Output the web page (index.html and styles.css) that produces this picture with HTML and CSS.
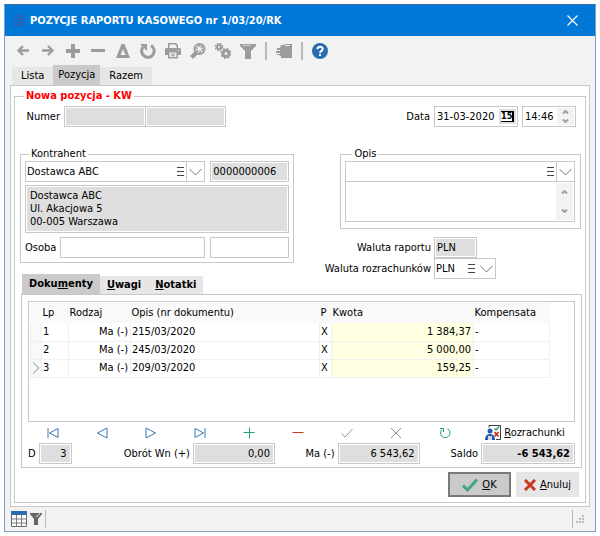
FILE: index.html
```html
<!DOCTYPE html>
<html lang="pl">
<head>
  <meta charset="UTF-8">
  <title>Pozycje raportu kasowego</title>
  <meta name="viewport" content="width=device-width, initial-scale=1">
  <link rel="stylesheet" href="styles.css">
</head>
<body>

<div class="window">
  <!-- TITLE BAR -->
  <header class="titlebar">
    <svg class="title-icon" width="12" height="11" viewBox="0 0 12 11"><path fill="#2a62b8" d="M0 0h2v2H0zM3 0h9v2H3zM0 3h2v2H0zM3 3h9v2H3zM0 6h2v2H0zM3 6h9v2H3zM0 9h2v2H0zM3 9h9v2H3z"/></svg>
    <h1>POZYCJE RAPORTU KASOWEGO nr 1/03/20/RK</h1>
    <button class="close" aria-label="Zamknij">
      <svg width="11" height="11" viewBox="0 0 11 11"><path d="M.5.5l10 10M10.500.5l-10 10" stroke="#fff" stroke-width="1.200"/></svg>
    </button>
  </header>

  <!-- TOOLBAR -->
  <div class="toolbar">
    <button aria-label="Wstecz"><svg viewBox="0 0 16 16"><path d="M14 7.500H4M8 3L3.500 7.500 8 12" fill="none" stroke="#9c9c9c" stroke-width="2.400"/></svg></button>
    <button aria-label="Dalej"><svg viewBox="0 0 16 16"><path d="M2 7.500h10M8 3l4.500 4.500L8 12" fill="none" stroke="#9c9c9c" stroke-width="2.400"/></svg></button>
    <button aria-label="Dodaj"><svg viewBox="0 0 16 16"><path d="M6 1h4v5h5v4h-5v5H6v-5H1V6h5z"/></svg></button>
    <button aria-label="Usuń"><svg viewBox="0 0 16 16"><path d="M1 6h14v3H1z"/></svg></button>
    <button aria-label="Zmień"><svg viewBox="0 0 16 16"><path fill-rule="evenodd" d="M6.500 1h3L15 15H1zM8 6l-2.500 6h5z"/></svg></button>
    <button aria-label="Odśwież"><svg viewBox="0 0 16 16"><path d="M11 2.500A6.300 6.300 0 1 1 3 4" fill="none" stroke="#9c9c9c" stroke-width="3"/><path d="M0 1h7v7L5 6z"/></svg></button>
    <button aria-label="Drukuj"><svg viewBox="0 0 16 16"><path fill-rule="evenodd" d="M3 0h8l2 2v3h2l1 1v6h-3v3.500H3V12H0V6l1-1h2zM4.500 1.500V5h7V3L10 1.500zM4.500 9.500V14h7V9.500zM13 7v1h1V7zM6 10.500h4v1H6zM6 12.300h4v1H6z"/></svg></button>
    <button aria-label="Szukaj"><svg viewBox="0 0 16 16"><circle cx="9.500" cy="6" r="5" fill="none" stroke="#9c9c9c" stroke-width="2"/><circle cx="9.500" cy="6" r="3" fill="none" stroke="#9c9c9c" stroke-width="2" stroke-dasharray="2 1"/><path d="M5 8l3 3-5 5-3-3z"/></svg></button>
    <button aria-label="Ustawienia"><svg viewBox="0 0 16 16"><circle cx="4" cy="4" r="2" fill="none" stroke="#9c9c9c" stroke-width="2"/><circle cx="4" cy="4" r="3.500" fill="none" stroke="#9c9c9c" stroke-width="1.500" stroke-dasharray="1.700 1.100"/><circle cx="11" cy="10.500" r="3" fill="none" stroke="#9c9c9c" stroke-width="3"/><circle cx="11" cy="10.500" r="4.800" fill="none" stroke="#9c9c9c" stroke-width="1.500" stroke-dasharray="2 1.770"/></svg></button>
    <button aria-label="Filtruj"><svg viewBox="0 0 16 16"><path d="M0 1h16v2l-5 5v8H5V8L0 3z"/><path d="M2.500 2.500h8" stroke="#d4d4d4"/></svg></button>
    <i class="sep"></i>
    <button aria-label="Dokument"><svg viewBox="0 0 16 16"><path d="M5 2h3l1-1h7v14H5v-2L3 12H1v-1h3v-1H0V8h4V7H1V5h3z"/><path d="M9 2.500h5" stroke="#f2f2f2"/></svg></button>
    <i class="sep"></i>
    <button aria-label="Pomoc"><svg viewBox="0 0 16 16"><circle cx="8" cy="8" r="8" fill="#2b6cb0"/><path d="M5.500 6.200C5.500 3 10.700 3 10.700 6 10.700 8 8 7.700 8 10" fill="none" stroke="#fff" stroke-width="2"/><path fill="#fff" d="M7 11h2v2H7z"/></svg></button>
  </div>

  <!-- MAIN TABS -->
  <div class="tabs" role="tablist">
    <button role="tab">Lista</button>
    <button role="tab" class="active" aria-selected="true">Pozycja</button>
    <button role="tab">Razem</button>
  </div>

  <main class="pane">
    <fieldset class="form">
      <legend class="form-title">Nowa pozycja - KW</legend>

      <div class="row head-row">
        <label class="num-label" for="numer">Numer</label>
        <div class="split">
          <input id="numer" class="ro" type="text" readonly>
          <input class="ro" type="text" aria-label="Numer dokumentu" readonly>
        </div>
        <label class="push" for="data">Data</label>
        <div class="field date">
          <input id="data" type="text" value="31-03-2020">
          <button class="cal" aria-label="Kalendarz"><span>15</span></button>
        </div>
        <div class="field time">
          <input type="text" value="14:46" aria-label="Godzina">
          <div class="spin">
            <button aria-label="Więcej"><svg width="7" height="4" viewBox="0 0 7 4"><path d="M1 3.500L3.500 1 6 3.500"/></svg></button>
            <button aria-label="Mniej"><svg width="7" height="4" viewBox="0 0 7 4"><path d="M1 .5L3.500 3 6 .5"/></svg></button>
          </div>
        </div>
      </div>

      <div class="middle">
        <div class="left">
          <fieldset class="group">
            <legend>Kontrahent</legend>
            <div class="pair">
              <div class="combo">
                <select aria-label="Kontrahent"><option>Dostawca ABC</option></select>
                <button class="list" aria-label="Lista kontrahentów"><svg width="7" height="9" viewBox="0 0 7 9"><path d="M0 .5h7M0 4.500h7M0 8.500h7"/></svg></button>
                <span class="arrow"><svg width="13" height="8" viewBox="0 0 13 8"><path d="M.5 1l6 6 6-6"/></svg></span>
              </div>
              <input class="ro" type="text" value="0000000006" aria-label="Kod" readonly>
            </div>
            <textarea class="ro address" rows="3" aria-label="Adres" readonly>Dostawca ABC
Ul. Akacjowa 5
00-005 Warszawa</textarea>
            <div class="pair">
              <div class="row">
                <label class="osoba" for="osoba">Osoba</label>
                <input id="osoba" class="grow" type="text">
              </div>
              <input type="text" aria-label="Osoba, dane dodatkowe">
            </div>
          </fieldset>

          <div class="tabs bold" role="tablist">
            <button role="tab" class="active" aria-selected="true">Doku<u>m</u>enty</button>
            <button role="tab"><u>U</u>wagi</button>
            <button role="tab"><u>N</u>otatki</button>
          </div>
        </div>

        <div class="right">
          <fieldset class="group opis">
            <legend>Opis</legend>
            <div class="combo">
              <select aria-label="Opis"><option></option></select>
              <button class="list" aria-label="Lista opisów"><svg width="7" height="9" viewBox="0 0 7 9"><path d="M0 .5h7M0 4.500h7M0 8.500h7"/></svg></button>
              <span class="arrow"><svg width="13" height="8" viewBox="0 0 13 8"><path d="M.5 1l6 6 6-6"/></svg></span>
            </div>
            <div class="field memo">
              <textarea aria-label="Treść opisu"></textarea>
              <div class="spin">
                <button aria-label="W górę"><svg width="7" height="4" viewBox="0 0 7 4"><path d="M1 3.500L3.500 1 6 3.500"/></svg></button>
                <button aria-label="W dół"><svg width="7" height="4" viewBox="0 0 7 4"><path d="M1 .5L3.500 3 6 .5"/></svg></button>
              </div>
            </div>
          </fieldset>
          <div class="currency">
            <label for="wal-raportu">Waluta raportu</label>
            <input id="wal-raportu" class="ro pln" type="text" value="PLN" readonly>
            <label for="wal-rozr">Waluta rozrachunków</label>
            <div class="combo plain">
              <select id="wal-rozr"><option>PLN</option></select>
              <button class="list" aria-label="Lista walut"><svg width="7" height="9" viewBox="0 0 7 9"><path d="M0 .5h7M0 4.500h7M0 8.500h7"/></svg></button>
              <span class="arrow"><svg width="13" height="8" viewBox="0 0 13 8"><path d="M.5 1l6 6 6-6"/></svg></span>
            </div>
          </div>
        </div>
      </div>

      <!-- DOCUMENTS -->
      <div class="panel">
        <div class="grid-box">
          <table>
            <colgroup>
              <col class="c-mark"><col class="c-lp"><col class="c-kind"><col class="c-desc"><col class="c-p"><col class="c-sum"><col class="c-comp">
            </colgroup>
            <thead>
              <tr><th></th><th>Lp</th><th>Rodzaj</th><th>Opis (nr dokumentu)</th><th>P</th><th>Kwota</th><th>Kompensata</th></tr>
            </thead>
            <tbody>
              <tr><td class="mark"></td><td>1</td><td class="num">Ma (-)</td><td>215/03/2020</td><td>X</td><td class="num sum">1 384,37</td><td>-</td></tr>
              <tr><td class="mark"></td><td>2</td><td class="num">Ma (-)</td><td>245/03/2020</td><td>X</td><td class="num sum">5 000,00</td><td>-</td></tr>
              <tr><td class="mark"><svg width="8" height="12" viewBox="0 0 8 12"><path d="M1 .5L7 6l-6 5.500" fill="none" stroke="#8c8c8c"/></svg></td><td>3</td><td class="num">Ma (-)</td><td>209/03/2020</td><td>X</td><td class="num sum">159,25</td><td>-</td></tr>
            </tbody>
          </table>
        </div>

        <div class="navigator">
          <button aria-label="Pierwszy"><svg class="blue" viewBox="0 0 12 12"><path d="M1 1v10M11 1.500v9L2.500 6z"/></svg></button>
          <button aria-label="Poprzedni"><svg class="blue" viewBox="0 0 12 12"><path d="M11 1v10L1.500 6z"/></svg></button>
          <button aria-label="Następny"><svg class="blue" viewBox="0 0 12 12"><path d="M1 1v10l9.500-5z"/></svg></button>
          <button aria-label="Ostatni"><svg class="blue" viewBox="0 0 12 12"><path d="M11 1v10M1 1.500v9L9.500 6z"/></svg></button>
          <button aria-label="Wstaw"><svg class="green" viewBox="0 0 12 12"><path d="M6.500 .5v11M.5 5.500h11"/></svg></button>
          <button aria-label="Skasuj"><svg class="red" viewBox="0 0 12 12"><path d="M.5 5.500h11"/></svg></button>
          <button aria-label="Zatwierdź"><svg class="grey" viewBox="0 0 12 12"><path d="M.5 6.500L4 10l7.500-8"/></svg></button>
          <button aria-label="Porzuć"><svg class="grey" viewBox="0 0 12 12"><path d="M1 1l10 10M11 1L1 11"/></svg></button>
          <button aria-label="Odśwież dane"><svg class="green" viewBox="0 0 12 12"><path d="M8.500 1.800A4.700 4.700 0 1 1 3 2.600M1 1.500h3.500V5"/></svg></button>
          <button class="settle">
            <svg width="16" height="15" viewBox="0 0 16 15"><path d="M4 2.500V.5h11.500v14H11" fill="none" stroke="#3c3c46"/><circle cx="5" cy="6" r="2.500" fill="#1d5fae"/><path fill="#1d5fae" d="M0 15c0-4 2-6 5-6s5 2 5 6z"/><path fill="#cfd8e2" d="M3 11h4v4H3z"/><path d="M9.500 3.500L11 5l3-3.500" fill="none" stroke="#2a9d78" stroke-width="1.500"/><path d="M9.500 7l4 4.500M13.500 7l-4 4.500" stroke="#d0341c" stroke-width="1.800"/></svg>
            <span><u>R</u>ozrachunki</span>
          </button>
        </div>

        <div class="totals">
          <div><label for="t-d">D</label><input id="t-d" class="ro w-count" type="text" value="3" readonly></div>
          <div><label for="t-wn">Obrót Wn (+)</label><input id="t-wn" class="ro w-sum" type="text" value="0,00" readonly></div>
          <div><label for="t-ma">Ma (-)</label><input id="t-ma" class="ro w-sum" type="text" value="6 543,62" readonly></div>
          <div><label for="t-saldo">Saldo</label><input id="t-saldo" class="ro w-saldo" type="text" value="-6 543,62" readonly></div>
        </div>
      </div>

      <div class="actions">
        <button class="ok"><svg width="16" height="14" viewBox="0 0 16 14"><path d="M1 7.500L5.500 12 15 1.500" fill="none" stroke="#43a582" stroke-width="3"/></svg><span><u>O</u>K</span></button>
        <button><svg width="12" height="12" viewBox="0 0 12 12"><path d="M1 1l10 10M11 1L1 11" stroke="#c8391f" stroke-width="3"/></svg><span><u>A</u>nuluj</span></button>
      </div>
    </fieldset>
  </main>

  <!-- STATUS BAR -->
  <footer class="statusbar">
    <svg width="16" height="16" viewBox="0 0 16 16"><path fill="#fff" stroke="#6a6a6a" d="M.5.5h15v15H.5z"/><path fill="#2b6cb0" d="M0 0h16v4H0z"/><path d="M5.500 4v12M10.500 4v12M1 8h14M1 12h14" stroke="#7c7c7c"/></svg>
    <svg width="12" height="12" viewBox="0 0 12 12"><path fill="#666" d="M0 0h12v1L8 6v6H4V6L0 1z"/><path d="M6 4l4-3.500" stroke="#eee"/></svg>
    <i class="sep"></i>
    <i class="sep push"></i>
    <svg width="9" height="8" viewBox="0 0 9 8"><path fill="#bdbdbd" d="M6 0h2v2H6zM3 3h2v2H3zM6 3h2v2H6zM0 6h2v2H0zM3 6h2v2H3zM6 6h2v2H6z"/></svg>
  </footer>
</div>

</body>
</html>
```

FILE: styles.css
```css
* {
  box-sizing: border-box;
}
body {
  margin: 4px;
  background: #fff;
}
body, button, input, select, textarea {
  font-family: Tahoma, "DejaVu Sans Condensed", "DejaVu Sans", sans-serif;
  font-size: 11px;
  line-height: 14px;
  color: #000;
}
button {
  border: none;
  background: none;
  padding: 0;
}
svg {
  display: block;
}
fieldset {
  margin: 0;
  padding: 0;
  border: 1px solid #c8c8c8;
  min-width: 0;
}
label {
  white-space: nowrap;
}
input, select, textarea {
  display: block;
  min-width: 0;
  height: 21px;
  margin: 0;
  padding: 0 2px;
  border: 1px solid #c8c8c8;
  border-radius: 0;
  background: #fff;
  outline: none;
}
.ro {
  background: #dedede;
  box-shadow: inset 0 0 0 1px #fff;
}
.push {
  margin-left: auto;
}
.row {
  display: flex;
  align-items: center;
}
.grow {
  flex: 1;
}

/* window frame */
.window {
  border: 1px solid #7c9fcb;
  border-top-color: #3a6ea5;
  background: #f2f2f2;
}
.titlebar {
  display: flex;
  align-items: center;
  height: 31px;
  padding: 0 15px 0 8px;
  background: #0078d7;
}
.titlebar h1 {
  flex: 1;
  margin: 0 0 0 5px;
  font-size: 11px;
  color: #fff;
}
.close {
  padding: 2px;
}

.toolbar {
  display: flex;
  align-items: center;
  gap: 9px;
  height: 29px;
  padding: 0 10px;
}
.toolbar svg {
  width: 16px;
  height: 16px;
  fill: #9c9c9c;
}
.sep {
  width: 1px;
  height: 18px;
  background: #b8b8b8;
}
.toolbar .sep {
  width: 2px;
}

.tabs {
  display: flex;
  align-items: flex-end;
  padding-left: 7px;
}
.tabs button {
  height: 18px;
  padding: 0 9px;
  background: #e6e6e6;
}
.tabs .active {
  height: 20px;
  padding: 0 5px;
  background: #cacaca;
}
.tabs.bold {
  padding-left: 2px;
}
.tabs.bold button {
  padding: 0 7px;
  font-weight: bold;
}

/* form */
.pane {
  margin: 0 5px;
  padding: 3px;
  border: 1px solid #c8c8c8;
  background: #fff;
}
.form {
  padding: 3px 0 5px;
}
.form-title {
  margin-left: 9px;
  padding: 0 2px;
  font-weight: bold;
  color: #f00;
}
.head-row {
  gap: 4px;
  padding-right: 9px;
}
.num-label {
  width: 45px;
  text-align: right;
}
.split {
  display: flex;
  width: 162px;
}
.split input {
  flex: 1;
}
.split input + input {
  border-left: none;
}
.field {
  display: flex;
  border: 1px solid #c8c8c8;
}
.field input, .field textarea {
  flex: 1;
  height: 19px;
  border: none;
}
.date {
  width: 84px;
}
.date input {
  padding: 0 0 0 2px;
}
.cal {
  width: 17px;
  margin: 2px 1px;
  padding: 2px;
  background: #dedede;
}
.cal span {
  display: block;
  border: 1px solid #000;
  border-width: 1px 2px 1px 0;
  background: #fff;
  font-size: 9px;
  font-weight: bold;
  line-height: 9px;
}
.time {
  width: 54px;
}
.spin {
  display: flex;
  flex-direction: column;
  justify-content: space-around;
  align-items: center;
  width: 17px;
  margin: 1px;
  background: #f2f2f2;
}
.spin path {
  fill: none;
  stroke: #a0a0a0;
  stroke-width: 2;
}

.middle {
  display: grid;
  grid-template-columns: minmax(0, 275fr) minmax(0, 241fr);
  gap: 46px;
  margin-top: 20px;
  padding: 0 4px 0 5px;
}
.left {
  display: flex;
  flex-direction: column;
  justify-content: space-between;
}
.group {
  padding: 0 4px 4px;
}
.group legend {
  margin-left: 4px;
  padding: 0 2px;
}
.pair {
  display: grid;
  grid-template-columns: 180fr 79fr;
  gap: 5px;
}
.osoba {
  width: 35px;
}
.address {
  width: 100%;
  height: 48px;
  margin: 3px 0 4px;
  padding: 3px 4px;
  line-height: 13px;
  resize: none;
  overflow: hidden;
}

.combo {
  position: relative;
}
.combo select {
  width: 100%;
  padding: 0 32px 0 1px;
  appearance: none;
}
.list {
  position: absolute;
  top: 6px;
  right: 21px;
}
.list path {
  stroke: #444;
}
.arrow {
  position: absolute;
  top: 1px;
  right: 1px;
  bottom: 1px;
  display: flex;
  align-items: center;
  padding: 0 2px;
  border-left: 1px solid #c8c8c8;
  pointer-events: none;
}
.arrow path {
  fill: none;
  stroke: #777;
}
.plain .arrow {
  border-left: none;
}

.opis {
  padding: 0 5px 6px 4px;
}
.group.opis legend {
  margin-left: 7px;
}
.memo {
  border-top: none;
}
.memo textarea {
  height: 39px;
  resize: none;
}
.currency {
  display: grid;
  grid-template-columns: auto 62px;
  align-items: center;
  column-gap: 3px;
  justify-content: end;
  margin: 8px 85px 15px 0;
}
.currency label {
  text-align: right;
}
.pln {
  width: 43px;
}

/* documents panel */
.panel {
  margin: 0 3px 0 6px;
  padding: 6px 6px 3px;
  border: 1px solid #c8c8c8;
}
.grid-box {
  min-height: 121px;
  padding: 1px;
  border: 1px solid #c8c8c8;
}
table {
  width: 520px;
  max-width: 100%;
  table-layout: fixed;
  border-collapse: collapse;
}
th, td {
  height: 18px;
  padding: 0 2px 0 1px;
  text-align: left;
  white-space: nowrap;
}
th {
  height: 20px;
  background: #f9f9f9;
  font-weight: normal;
}
td {
  border: 1px solid #f0f0f0;
  border-top: none;
}
.c-mark { width: 11px; }
.c-lp { width: 27px; }
.c-kind { width: 62px; }
.c-desc { width: 189px; }
.c-p { width: 12px; }
.c-sum { width: 142px; }
.num { text-align: right; }
td.sum { background: #ffffe1; }
td.mark {
  background: #f9f9f9;
}

.navigator {
  display: grid;
  grid-template-columns: repeat(9, 49fr) 106fr;
  height: 21px;
}
.navigator button {
  display: flex;
  align-items: center;
  justify-content: center;
}
.navigator .settle {
  gap: 3px;
  padding-left: 6px;
  white-space: nowrap;
}
.navigator svg {
  flex: none;
}
.blue, .green, .red, .grey {
  width: 12px;
  height: 12px;
  fill: none;
}
.blue { stroke: #3a78b5; }
.green { stroke: #2a9d78; }
.red { stroke: #c8391f; }
.grey { stroke: #909090; }

.totals {
  display: grid;
  grid-template-columns: 42fr 204fr 145fr 156fr;
}
.totals div {
  display: flex;
  align-items: center;
  justify-content: flex-end;
  gap: 3px;
}
.totals input {
  padding-right: 4px;
  text-align: right;
}
.w-count { width: 33px; }
.w-sum { width: 82px; }
.w-saldo {
  width: 94px;
  font-weight: bold;
}

.actions {
  display: flex;
  justify-content: flex-end;
  gap: 5px;
  margin: 4px 6px 0;
}
.actions button {
  display: flex;
  align-items: center;
  justify-content: center;
  gap: 4px;
  width: 63px;
  height: 25px;
  background: #e6e6e6;
}
.actions .ok {
  border: 2px solid #7a7a7a;
  background: #cacaca;
}

.statusbar {
  display: flex;
  align-items: center;
  gap: 3px;
  height: 24px;
  padding: 0 10px 0 6px;
}
```
